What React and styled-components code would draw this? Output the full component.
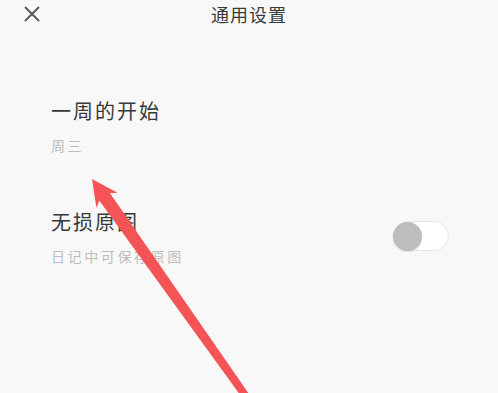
import React from "react";
import styled, { createGlobalStyle } from "styled-components";

const GlobalStyle = createGlobalStyle`
  html, body {
    margin: 0;
    padding: 0;
    background: #f8f8f8;
  }
  body {
    font-family: "Noto Sans CJK SC", "Noto Sans", sans-serif;
  }
`;

const settings = [
  { title: "一周的开始", desc: "周三" },
  { title: "无损原图", desc: "日记中可保存原图", toggle: true },
];

export default function App() {
  return (
    <Page>
      <GlobalStyle />
      <Header>
        <CloseBtn>
          <svg width="16" height="16" viewBox="0 0 16 16">
            <path d="M1 1 L15 15 M15 1 L1 15" stroke="#585858" strokeWidth="1.9" />
          </svg>
        </CloseBtn>
        <Title>通用设置</Title>
        <span />
      </Header>

      <List>
        {settings.map((item) => (
          <Row key={item.title}>
            <Texts>
              <RowTitle>{item.title}</RowTitle>
              <RowDesc>{item.desc}</RowDesc>
            </Texts>
            {item.toggle && (
              <Switch>
                <Knob />
              </Switch>
            )}
          </Row>
        ))}
      </List>

      {/* red annotation arrow drawn over the screen */}
      <Arrow width="498" height="393" viewBox="0 0 498 393">
        <polygon
          points="92,179 117.6,192.7 110,193.2 268.3,421.8 262.5,425.8 99.4,200.8 96.4,207.7"
          fill="#f45456"
        />
      </Arrow>
    </Page>
  );
}

const Page = styled.div`
  position: relative;
  width: 498px;
  height: 393px;
  overflow: hidden;
  background: #f8f8f8;
`;

const Header = styled.div`
  display: grid;
  grid-template-columns: 1fr auto 1fr;
  align-items: center;
  height: 28px;
`;

const CloseBtn = styled.div`
  display: flex;
  align-items: center;
  padding-left: 24px;
  padding-top: 0px;
  svg {
    display: block;
  }
`;

const Title = styled.div`
  font-size: 18px;
  line-height: 28px;
  letter-spacing: 1px;
  color: #3a3a3a;
`;

const List = styled.div`
  display: flex;
  flex-direction: column;
  gap: 53px;
  padding: 69px 49px 0 51px;
`;

const Row = styled.div`
  display: flex;
  align-items: center;
  justify-content: space-between;
`;

const Texts = styled.div`
  display: flex;
  flex-direction: column;
  gap: 10px;
`;

const RowTitle = styled.div`
  font-size: 20px;
  line-height: 28px;
  letter-spacing: 2px;
  color: #383838;
`;

const RowDesc = styled.div`
  font-size: 14px;
  line-height: 20px;
  letter-spacing: 2.6px;
  color: #bdbdbd;
`;

const Switch = styled.div`
  display: flex;
  align-items: center;
  box-sizing: border-box;
  width: 56px;
  height: 30px;
  border-radius: 15px;
  background: #ffffff;
  border: 1px solid #e6e6e6;
  margin-top: -2px;
`;

const Knob = styled.div`
  width: 29px;
  height: 29px;
  margin-left: -1px;
  border-radius: 50%;
  background: #bdbdbd;
  box-shadow: 0 1px 2px rgba(0, 0, 0, 0.12);
`;

const Arrow = styled.svg`
  position: absolute;
  left: 0;
  top: 0;
  pointer-events: none;
`;
